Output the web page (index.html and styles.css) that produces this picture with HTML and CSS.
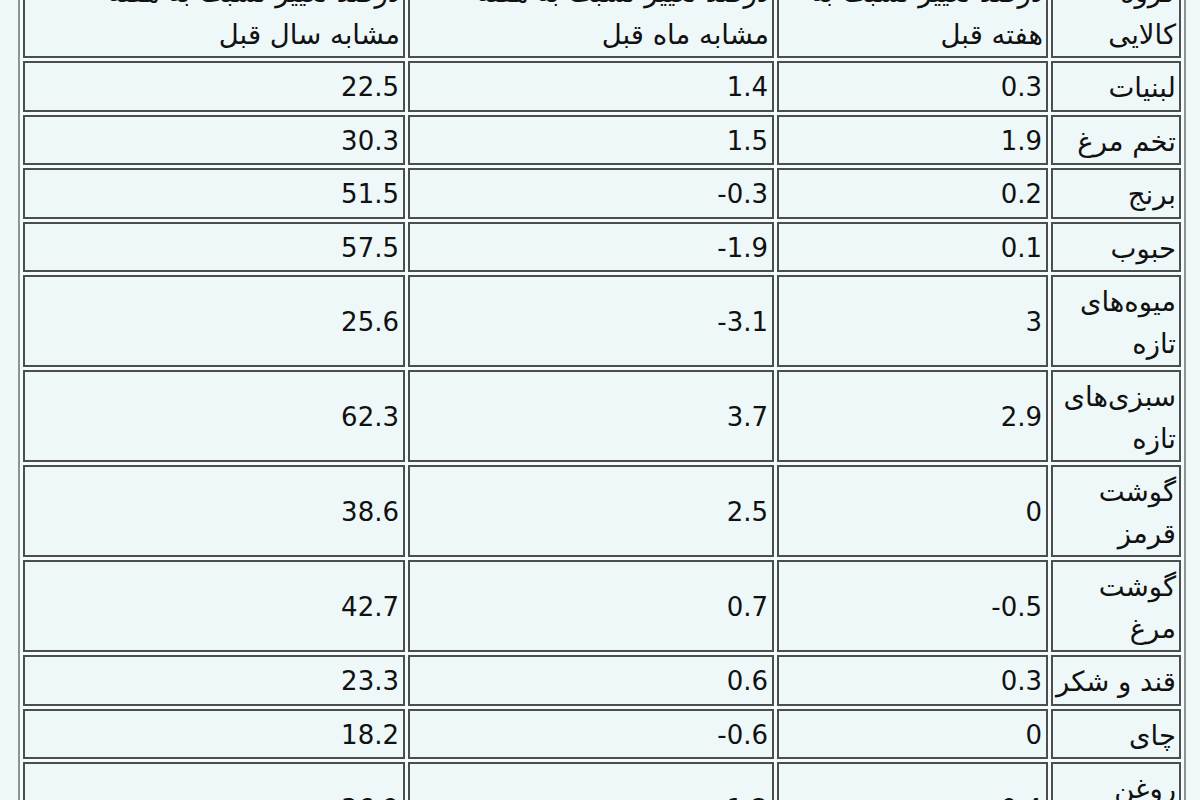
FILE: index.html
```html
<!DOCTYPE html>
<html lang="fa">
<head>
<meta charset="utf-8">
<title>جدول تغییر قیمت</title>
<link rel="stylesheet" href="styles.css">
</head>
<body>
<table class="grid" dir="rtl">
  <colgroup>
    <col class="c-group">
    <col class="c-week">
    <col class="c-month">
    <col class="c-year">
  </colgroup>
  <tbody>
    <tr>
      <td class="label">گروه<br>کالایی</td>
      <td class="label">درصد تغییر نسبت به<br>هفته قبل</td>
      <td class="label">درصد تغییر نسبت به هفته<br>مشابه ماه قبل</td>
      <td class="label">درصد تغییر نسبت به هفته<br>مشابه سال قبل</td>
    </tr>
    <tr><td class="label">لبنیات</td><td class="num">0.3</td><td class="num">1.4</td><td class="num">22.5</td></tr>
    <tr><td class="label">تخم مرغ</td><td class="num">1.9</td><td class="num">1.5</td><td class="num">30.3</td></tr>
    <tr><td class="label">برنج</td><td class="num">0.2</td><td class="num">-0.3</td><td class="num">51.5</td></tr>
    <tr><td class="label">حبوب</td><td class="num">0.1</td><td class="num">-1.9</td><td class="num">57.5</td></tr>
    <tr><td class="label">میوه‌های<br>تازه</td><td class="num">3</td><td class="num">-3.1</td><td class="num">25.6</td></tr>
    <tr><td class="label">سبزی‌های<br>تازه</td><td class="num">2.9</td><td class="num">3.7</td><td class="num">62.3</td></tr>
    <tr><td class="label">گوشت<br>قرمز</td><td class="num">0</td><td class="num">2.5</td><td class="num">38.6</td></tr>
    <tr><td class="label">گوشت<br>مرغ</td><td class="num">-0.5</td><td class="num">0.7</td><td class="num">42.7</td></tr>
    <tr><td class="label">قند و شکر</td><td class="num">0.3</td><td class="num">0.6</td><td class="num">23.3</td></tr>
    <tr><td class="label">چای</td><td class="num">0</td><td class="num">-0.6</td><td class="num">18.2</td></tr>
    <tr><td class="label">روغن<br>نباتی</td><td class="num">0.4</td><td class="num">1.2</td><td class="num">36.9</td></tr>
  </tbody>
</table>
</body>
</html>
```

FILE: styles.css
```css
html, body {
  margin: 0;
  padding: 0;
  background: #eef8f9;
}

body {
  font-family: "DejaVu Sans", "Noto Sans", sans-serif;
  color: #111;
  overflow: hidden;
  height: 800px;
}

.grid {
  margin: -37px 0 0 18px;
  width: 1167px;
  table-layout: fixed;
  border-collapse: separate;
  border-spacing: 3px;
  border-left: 2px solid #8d9293;
  border-right: 2px solid #8d9293;
  background: #f6fbfb;
}

.c-group { width: 130px; }
.c-week { width: 271px; }
.c-month { width: 366px; }
.c-year { width: 382px; }

.grid td {
  box-sizing: border-box;
  border: 2px solid #4a4e4e;
  background: #eef8f9;
  padding: 4px 3px 1px 1px;
  font-size: 26px;
  line-height: 41.5px;
  text-align: right;
  vertical-align: middle;
  white-space: nowrap;
}

.grid td.label {
  font-size: 27.5px;
}

.grid td.num {
  direction: ltr;
  text-align: right;
  padding-right: 4px;
}
```
